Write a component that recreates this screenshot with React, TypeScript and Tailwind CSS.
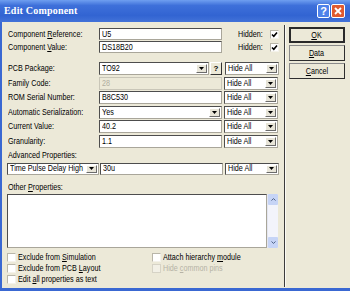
import React from "react";

const F = "font-['Liberation_Sans',Arial,sans-serif]";
const sunk = "border border-t-[#4d4d4d] border-l-[#4d4d4d] border-r-[#a9a69a] border-b-[#a9a69a]";

function T({ children, center }: { children: React.ReactNode; center?: boolean }) {
  return (
    <span className={`inline-block whitespace-nowrap scale-x-[0.8] ${center ? "origin-center" : "origin-left"}`}>
      {children}
    </span>
  );
}

function Arrow() {
  return (
    <div className="h-full w-[11px] bg-[#e8e5d8] border border-t-white border-l-white border-r-[#6b6b6b] border-b-[#6b6b6b] flex items-center justify-center">
      <svg width="5" height="3" viewBox="0 0 5 3">
        <path d="M0 0H5L2.5 3Z" fill="#000" />
      </svg>
    </div>
  );
}

function TextBox({ value, w, disabled }: { value: string; w: string; disabled?: boolean }) {
  return (
    <div
      className={`${w} h-full flex items-center pl-[2px] ${
        disabled
          ? "bg-[#ece9d8] border border-[#c9c6b8] text-[#b0ada0]"
          : `bg-white ${sunk} text-black`
      }`}
    >
      <T>{value}</T>
    </div>
  );
}

function Combo({ value, w }: { value: string; w: string }) {
  return (
    <div className={`${w} h-full flex items-stretch bg-white ${sunk}`}>
      <span className="flex-1 flex items-center pl-[2px] text-black overflow-hidden">
        <T>{value}</T>
      </span>
      <div className="p-px">
        <Arrow />
      </div>
    </div>
  );
}

function Check({ checked, faint }: { checked?: boolean; faint?: boolean }) {
  return (
    <div
      className={`w-[9px] h-[9px] shrink-0 flex items-center justify-center ${
        faint
          ? "border border-[#d6d3c6] bg-[#f2f0e6]"
          : "bg-white border border-t-[#b9b6a9] border-l-[#b9b6a9] border-r-[#f4f2ea] border-b-[#f4f2ea]"
      }`}
    >
      {checked && (
        <svg width="7" height="7" viewBox="0 0 7 7">
          <path d="M1 3.5L2.8 5.3L6 1.5" stroke="#000" strokeWidth="1.6" fill="none" />
        </svg>
      )}
    </div>
  );
}

function PropRow({ label, children }: { label: React.ReactNode; children: React.ReactNode }) {
  return (
    <div className="flex items-center h-[13px]">
      <div className="w-[91px] text-black">
        <T>{label}</T>
      </div>
      <div className="flex items-center h-full">{children}</div>
    </div>
  );
}

function HideAll() {
  return <Combo value="Hide All" w="w-[54px]" />;
}

function Btn({ children, def }: { children: React.ReactNode; def?: boolean }) {
  return (
    <div
      className={`h-[16px] w-[56px] flex items-center justify-center bg-[#ece9d8] text-black ${
        def
          ? "border-2 border-[#2a2a2a]"
          : "border border-t-[#8a8a8a] border-l-[#8a8a8a] border-r-[#2e2e2e] border-b-[#2e2e2e]"
      }`}
    >
      <T center>{children}</T>
    </div>
  );
}

export default function App() {
  return (
    <div className={`w-[350px] h-[291px] overflow-hidden bg-[#3a68d2] flex flex-col text-[9px] leading-none ${F}`}>
      {/* Title bar */}
      <div className="h-[22px] shrink-0 flex items-center bg-[linear-gradient(to_bottom,#6f9ff0_0%,#3e70da_25%,#3264d2_70%,#4272d8_100%)]">
        <span className="pl-[4px] text-white text-[10px] font-bold font-['Liberation_Serif',serif] tracking-[0.2px]">
          Edit Component
        </span>
        <div className="ml-auto mr-[5px] flex gap-px">
          <div className="w-[13px] h-[14px] rounded-[2px] border border-white bg-[#4f82ea] flex items-center justify-center text-white text-[11px] font-bold font-['Liberation_Sans',sans-serif]">
            ?
          </div>
          <div className="w-[14px] h-[14px] rounded-[2px] border border-white bg-[#e05a30] flex items-center justify-center">
            <svg width="8" height="8" viewBox="0 0 8 8">
              <path d="M1 1L7 7M7 1L1 7" stroke="#fff" strokeWidth="1.8" />
            </svg>
          </div>
        </div>
      </div>

      {/* Body */}
      <div className="flex-1 ml-[2px] mb-[3px] bg-[#ece9d8] flex">
        {/* Left panel */}
        <div className="w-[282px] pl-[6px] flex flex-col">
          <div className="mt-[6px] flex items-center h-[12px]">
            <div className="w-[91px] text-black">
              <T>
                Component <span className="underline">R</span>eference:
              </T>
            </div>
            <TextBox value="U5" w="w-[123px]" />
            <span className="ml-[16px] w-[32px] text-black">
              <T>Hidden:</T>
            </span>
            <Check checked />
          </div>
          <div className="mt-[1px] flex items-center h-[12px]">
            <div className="w-[91px] text-black">
              <T>
                Component <span className="underline">V</span>alue:
              </T>
            </div>
            <TextBox value="DS18B20" w="w-[123px]" />
            <span className="ml-[16px] w-[32px] text-black">
              <T>Hidden:</T>
            </span>
            <Check checked />
          </div>

          <div className="mt-[9px] flex flex-col gap-[1.5px]">
            <PropRow label="PCB Package:">
              <Combo value="TO92" w="w-[110px]" />
              <div className="ml-[1px] w-[12px] h-full bg-[#ece9d8] border border-t-white border-l-white border-r-[#333] border-b-[#333] flex items-center justify-center text-[8px] font-bold">
                ?
              </div>
              <div className="ml-[3px] h-full">
                <HideAll />
              </div>
            </PropRow>
            <PropRow label="Family Code:">
              <TextBox value="28" w="w-[123px]" disabled />
              <div className="ml-[2px] h-full">
                <HideAll />
              </div>
            </PropRow>
            <PropRow label="ROM Serial Number:">
              <TextBox value="B8C530" w="w-[123px]" />
              <div className="ml-[2px] h-full">
                <HideAll />
              </div>
            </PropRow>
            <PropRow label="Automatic Serialization:">
              <Combo value="Yes" w="w-[123px]" />
              <div className="ml-[2px] h-full">
                <HideAll />
              </div>
            </PropRow>
            <PropRow label="Current Value:">
              <TextBox value="40.2" w="w-[123px]" />
              <div className="ml-[2px] h-full">
                <HideAll />
              </div>
            </PropRow>
            <PropRow label="Granularity:">
              <TextBox value="1.1" w="w-[123px]" />
              <div className="ml-[2px] h-full">
                <HideAll />
              </div>
            </PropRow>
          </div>

          <div className="mt-[3px] h-[10px] flex items-center text-black">
            <T>Advanced Properties:</T>
          </div>
          <div className="mt-[2px] h-[12px] flex items-center -ml-[1px]">
            <Combo value="Time Pulse Delay High" w="w-[92px]" />
            <div className="ml-[1px] h-full">
              <TextBox value="30u" w="w-[123px]" />
            </div>
            <div className="ml-[2px] h-full">
              <HideAll />
            </div>
          </div>

          <div className="mt-[8px] h-[10px] flex items-center text-black">
            <T>
              Other <span className="underline">P</span>roperties:
            </T>
          </div>
          <div className="mt-px h-[54px] flex -ml-[1px]">
            <div className={`w-[260px] h-full bg-white ${sunk}`} />
            <div className="w-[11px] h-full bg-[#f3f4fb] flex flex-col justify-between border-l border-[#e4e6f0]">
              <div className="h-[11px] bg-[#c6d4f6] flex items-center justify-center rounded-[1px]">
                <svg width="5" height="3" viewBox="0 0 5 3">
                  <path d="M0.5 2.5L2.5 0.6L4.5 2.5" stroke="#4d6185" strokeWidth="1" fill="none" />
                </svg>
              </div>
              <div className="h-[11px] bg-[#c6d4f6] flex items-center justify-center rounded-[1px]">
                <svg width="5" height="3" viewBox="0 0 5 3">
                  <path d="M0.5 0.5L2.5 2.4L4.5 0.5" stroke="#4d6185" strokeWidth="1" fill="none" />
                </svg>
              </div>
            </div>
          </div>

          <div className="mt-[4.5px] flex text-black">
            <div className="w-[144px] flex flex-col">
              <div className="h-[11px] flex items-center gap-[2px] -ml-px">
                <Check />
                <T>
                  Exclude from <span className="underline">S</span>imulation
                </T>
              </div>
              <div className="h-[11px] flex items-center gap-[2px] -ml-px">
                <Check />
                <T>
                  Exclude from PCB <span className="underline">L</span>ayout
                </T>
              </div>
              <div className="h-[11px] flex items-center gap-[2px] -ml-px">
                <Check />
                <T>
                  Edit <span className="underline">a</span>ll properties as text
                </T>
              </div>
            </div>
            <div className="flex flex-col">
              <div className="h-[11px] flex items-center gap-[2px]">
                <Check />
                <T>
                  Attach hierarchy <span className="underline">m</span>odule
                </T>
              </div>
              <div className="h-[11px] flex items-center gap-[2px] text-[#b6b3a6]">
                <Check faint />
                <T>
                  Hide <span className="underline">c</span>ommon pins
                </T>
              </div>
            </div>
          </div>
        </div>

        {/* Divider */}
        <div className="mt-[3px] mb-px flex">
          <div className="w-px bg-[#3c3c3c]" />
          <div className="w-px bg-[#fbfaf4]" />
        </div>

        {/* Buttons */}
        <div className="ml-[3px] mt-[5px] flex flex-col gap-[2px]">
          <Btn def>
            <span className="underline">O</span>K
          </Btn>
          <Btn>
            <span className="underline">D</span>ata
          </Btn>
          <Btn>
            <span className="underline">C</span>ancel
          </Btn>
        </div>
      </div>
    </div>
  );
}
